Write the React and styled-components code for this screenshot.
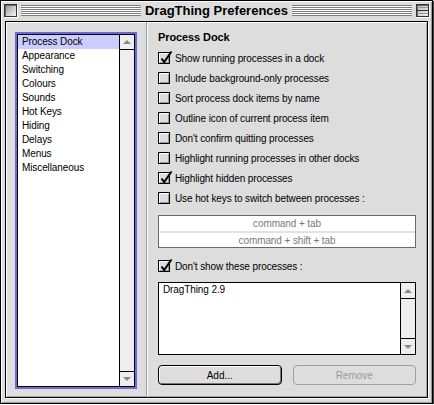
import React from 'react';
import styled, { createGlobalStyle } from 'styled-components';

const GlobalStyle = createGlobalStyle`
  html, body {
    margin: 0;
    padding: 0;
    background: #fff;
  }
  body {
    font-family: "Liberation Sans", Arial, sans-serif;
    font-size: 10px;
    color: #000;
  }
  * { box-sizing: border-box; }
`;

const sections = [
  'Process Dock',
  'Appearance',
  'Switching',
  'Colours',
  'Sounds',
  'Hot Keys',
  'Hiding',
  'Delays',
  'Menus',
  'Miscellaneous',
];

const options = [
  { label: 'Show running processes in a dock', checked: true },
  { label: 'Include background-only processes' },
  { label: 'Sort process dock items by name' },
  { label: 'Outline icon of current process item' },
  { label: "Don't confirm quitting processes" },
  { label: 'Highlight running processes in other docks' },
  { label: 'Highlight hidden processes', checked: true },
  { label: 'Use hot keys to switch between processes :' },
];

const Window = styled.div`
  width: 433px;
  height: 404px;
  border: 1px solid #000;
  background: #dddddd;
  box-shadow: inset 1px 1px 0 #fff, inset -1px -1px 0 #999, 1px 1px 0 #444;
  display: flex;
  flex-direction: column;
`;

const TitleBar = styled.div`
  height: 19px;
  flex: none;
  display: flex;
  align-items: center;
  padding: 0 3px;
`;

const CloseBox = styled.div`
  width: 13px;
  height: 13px;
  flex: none;
  border: 1px solid #333;
  background: linear-gradient(135deg, #8a8a8a 0%, #c8c8c8 50%, #f4f4f4 100%);
  box-shadow: inset 1px 1px 0 #666, 1px 1px 0 #fff;
`;

// windowshade box: a framed square split by a bar
const ShadeBox = styled(CloseBox)`
  display: flex;
  flex-direction: column;
  justify-content: center;
  background: linear-gradient(135deg, #bbb 0%, #eee 100%);

  &::after {
    content: '';
    height: 1px;
    background: #333;
    box-shadow: 0 -3px 0 #999, 0 3px 0 #999;
  }
`;

const Stripes = styled.div`
  flex: 1;
  height: 11px;
  margin: 0 4px;
  background: repeating-linear-gradient(to bottom, #7d7d7d 0 1px, #fff 1px 2px);
`;

const Title = styled.div`
  font-size: 13px;
  font-weight: bold;
  line-height: 19px;
  white-space: nowrap;
`;

const Frame = styled.div`
  flex: 1;
  display: flex;
  padding: 1px 4px 5px 4px;
`;

const Panel = styled.div`
  flex: 1;
  display: flex;
  border: 1px solid #000;
  box-shadow: inset 1px 1px 0 #fff, inset -1px -1px 0 #a8a8a8, 1px 1px 0 #fff;
`;

const Sidebar = styled.div`
  width: 141px;
  flex: none;
  border-right: 1px solid #999;
  padding: 10px 0 0 9px;
`;

const FocusRing = styled.div`
  width: 122px;
  height: 357px;
  border: 2px solid #6a6ad4;
  display: flex;
`;

const ListBox = styled.div`
  flex: 1;
  display: flex;
  border: 1px solid #000;
  background: #fff;
`;

const ProcessList = styled(ListBox)`
  flex: none;
  height: 73px;
  margin-top: 6px;
`;

const Items = styled.div`
  flex: 1;
  display: flex;
  flex-direction: column;
`;

const Item = styled.div`
  height: 14px;
  line-height: 14px;
  padding-left: 4px;
  letter-spacing: -0.1px;
  white-space: nowrap;
  background: ${p => (p.$selected ? '#ccccff' : 'transparent')};
`;

const ScrollBar = styled.div`
  width: 15px;
  flex: none;
  border-left: 1px solid #000;
  background: #eeeeee;
  display: flex;
  flex-direction: column;
  justify-content: space-between;
`;

const Arrow = styled.div`
  height: ${p => p.$size}px;
  display: flex;
  align-items: center;
  justify-content: center;
  border-bottom: ${p => (p.$down ? 'none' : '1px solid #000')};
  border-top: ${p => (p.$down ? '1px solid #000' : 'none')};

  &::after {
    content: '';
    border-left: 4px solid transparent;
    border-right: 4px solid transparent;
    ${p => (p.$down ? 'border-top: 4px solid #888;' : 'border-bottom: 4px solid #888;')}
  }
`;

const Main = styled.div`
  flex: 1;
  border-left: 1px solid #fff;
  padding: 8px 11px 0 10px;
  display: flex;
  flex-direction: column;
`;

const Heading = styled.div`
  font-size: 11px;
  font-weight: bold;
  line-height: 14px;
  letter-spacing: -0.1px;
  margin-bottom: 4px;
`;

const CheckRow = styled.label`
  height: 20px;
  display: flex;
  align-items: center;
  gap: 5px;
  letter-spacing: -0.1px;
  white-space: nowrap;
  margin-top: ${p => p.$gap || 0}px;
`;

const Box = styled.span`
  position: relative;
  width: 12px;
  height: 12px;
  flex: none;
  border: 1px solid #000;
  background: #dcdcdc;
  box-shadow: inset 1px 1px 0 #fff, inset -1px -1px 0 #999;
`;

const Tick = styled.svg`
  position: absolute;
  left: 0;
  top: -3px;
  overflow: visible;
`;

const Checkbox = ({ checked }) => (
  <Box>
    {checked && (
      <Tick width="14" height="14" viewBox="0 0 14 14">
        <polyline points="2.5,8.5 5.2,12 12.5,1.5" fill="none" stroke="#000" strokeWidth="2" />
      </Tick>
    )}
  </Box>
);

const KeyTable = styled.div`
  margin-top: 7px;
  border: 1px solid #6a6a6a;
  background: #fff;
`;

const KeyRow = styled.div`
  height: ${p => p.$h}px;
  line-height: ${p => p.$h}px;
  text-align: center;
  color: #7a7a7a;
  letter-spacing: -0.1px;
  border-top: ${p => (p.$split ? '2px solid #e2e2e2' : 'none')};
`;

const ButtonRow = styled.div`
  display: flex;
  gap: 11px;
  margin-top: 10px;
`;

const Button = styled.button`
  flex: 1;
  height: 20px;
  padding: 0;
  font-family: inherit;
  font-size: 10px;
  border-radius: 4px;
  background: #dddddd;
  border: 1px solid ${p => (p.disabled ? '#a0a0a0' : '#000')};
  color: ${p => (p.disabled ? '#9a9a9a' : '#000')};
  box-shadow: ${p =>
    p.disabled ? 'none' : 'inset 1px 1px 0 #fff, inset -1px -1px 0 #777'};
`;

export default function App() {
  return (
    <>
      <GlobalStyle />
      <Window>
        <TitleBar>
          <CloseBox />
          <Stripes />
          <Title>DragThing Preferences</Title>
          <Stripes />
          <ShadeBox />
        </TitleBar>
        <Frame>
          <Panel>
            <Sidebar>
              <FocusRing>
                <ListBox>
                  <Items>
                    {sections.map((s, i) => (
                      <Item key={s} $selected={i === 0}>
                        {s}
                      </Item>
                    ))}
                  </Items>
                  <ScrollBar>
                    <Arrow $size={15} />
                    <Arrow $size={15} $down />
                  </ScrollBar>
                </ListBox>
              </FocusRing>
            </Sidebar>
            <Main>
              <Heading>Process Dock</Heading>
              {options.map(o => (
                <CheckRow key={o.label}>
                  <Checkbox checked={o.checked} />
                  {o.label}
                </CheckRow>
              ))}
              <KeyTable>
                <KeyRow $h={15}>command + tab</KeyRow>
                <KeyRow $h={16} $split>
                  command + shift + tab
                </KeyRow>
              </KeyTable>
              <CheckRow $gap={8}>
                <Checkbox checked />
                Don't show these processes :
              </CheckRow>
              <ProcessList>
                <Items>
                  <Item>DragThing 2.9</Item>
                </Items>
                <ScrollBar>
                  <Arrow $size={16} />
                  <Arrow $size={16} $down />
                </ScrollBar>
              </ProcessList>
              <ButtonRow>
                <Button>Add...</Button>
                <Button disabled>Remove</Button>
              </ButtonRow>
            </Main>
          </Panel>
        </Frame>
      </Window>
    </>
  );
}
